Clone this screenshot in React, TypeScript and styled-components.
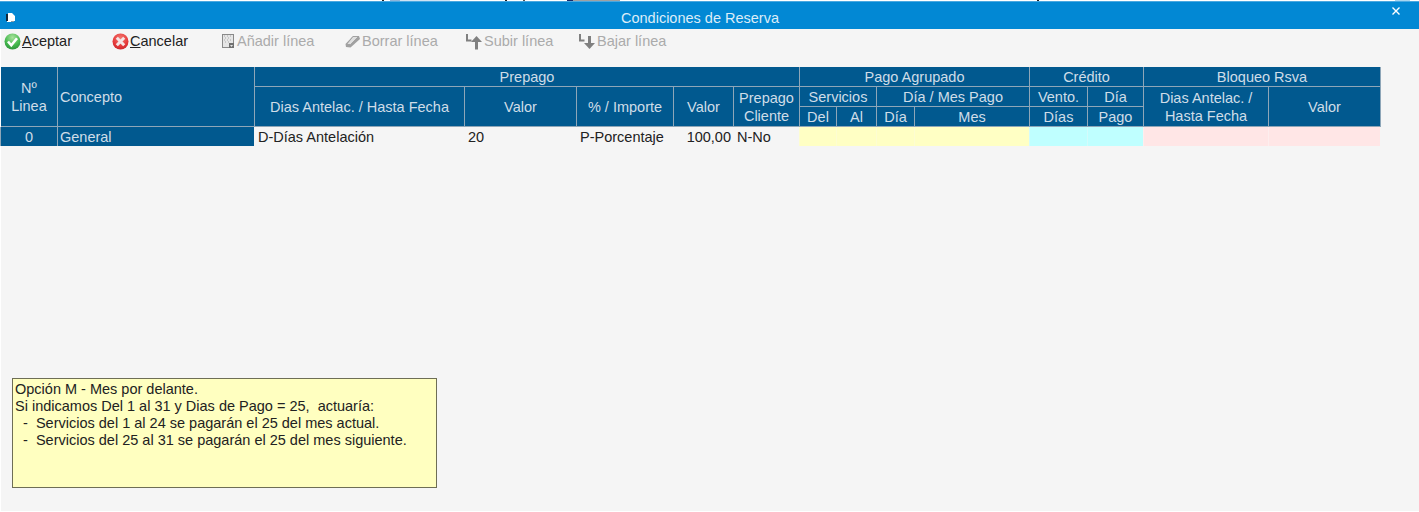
import React from 'react';
import styled, { createGlobalStyle } from 'styled-components';

const GlobalStyle = createGlobalStyle`
  html, body {
    margin: 0;
    padding: 0;
    background: #ffffff;
    overflow: hidden;
  }
  body {
    font-family: "Liberation Sans", Arial, sans-serif;
    font-size: 14.5px;
  }
`;

const Page = styled.div`
  width: 1419px;
  height: 511px;
  display: flex;
  flex-direction: column;
`;

// sliver of the window behind this dialog
const TopEdge = styled.div`
  height: 1px;
  flex: none;
  background: linear-gradient(
    to right,
    #ffffff 382px,
    #222222 382px 384px,
    #ffffff 384px 390px,
    #8fb4d8 390px 400px,
    #cfe2f2 400px 450px,
    #ffffff 450px 505px,
    #222222 505px 507px,
    #ffffff 507px 523px,
    #555555 523px 525px,
    #ffffff 525px 567px,
    #1a2a6a 567px 573px,
    #a0a0a0 573px 620px,
    #ffffff 620px 1037px,
    #222222 1037px 1039px,
    #ffffff 1039px 1395px,
    #a8d4ee 1395px 1410px,
    #ffffff 1410px
  );
`;

const TitleBar = styled.div`
  height: 28px;
  flex: none;
  box-sizing: border-box;
  display: flex;
  align-items: center;
  justify-content: space-between;
  padding: 0 19px 0 5px;
  border-top: 1px solid #4aa8e0;
  background: #0288d4;
  color: #dcedf8;
`;

const Title = styled.div`
  flex: 1;
  text-align: center;
  font-size: 14.5px;
  padding-top: 4px;
  margin-right: 8px;
`;

const WindowGlyph = styled.svg`
  width: 11px;
  height: 11px;
  margin-top: 3px;
`;

const CloseMark = styled.svg`
  width: 8px;
  height: 8px;
  margin-bottom: 9px;
`;

const Body = styled.div`
  flex: 1;
  display: flex;
  flex-direction: column;
  border-left: 1px solid #ffffff;
  background: #f5f5f5;
`;

const Toolbar = styled.div`
  height: 38px;
  flex: none;
  display: flex;
  align-items: flex-start;
  padding: 3px 0 0 3px;
  box-sizing: border-box;
`;

const ToolButton = styled.div<{ $width: number; $disabled?: boolean }>`
  width: ${(p) => p.$width}px;
  height: 18px;
  flex: none;
  display: flex;
  align-items: center;
  gap: 1px;
  font-size: 14.5px;
  color: ${(p) => (p.$disabled ? '#ababab' : '#222222')};

  u {
    text-decoration: underline;
  }
`;

const gridColumns = '56px 196px 209px 111px 96px 59px 65px 36px 39px 37px 114px 57px 55px 124px 111px';

const HeadGrid = styled.div`
  width: 1380px;
  display: grid;
  grid-template-columns: ${gridColumns};
  grid-template-rows: 19px 19px 19px;
  gap: 1px;
  padding-bottom: 1px;
  background: #8ea6b8;
`;

const HeadCell = styled.div<{ $col: string; $row: string; $left?: boolean }>`
  grid-column: ${(p) => p.$col};
  grid-row: ${(p) => p.$row};
  display: flex;
  align-items: center;
  justify-content: ${(p) => (p.$left ? 'flex-start' : 'center')};
  padding: 1px 0 0 ${(p) => (p.$left ? '2px' : '0')};
  box-sizing: border-box;
  text-align: center;
  line-height: 18px;
  background: #01598f;
  color: #cfdde8;
  font-size: 14.5px;
  white-space: pre-line;
`;

const DataGrid = styled.div`
  width: 1380px;
  display: grid;
  grid-template-columns: ${gridColumns};
  grid-template-rows: 19px;
  gap: 1px;
`;

const tones = {
  head: { fill: '#01598f', seam: '#8ea6b8' },
  plain: { fill: 'transparent', seam: 'transparent' },
  yellow: { fill: '#ffffc4', seam: '#fdfdd2' },
  cyan: { fill: '#bfffff', seam: '#d4fbfb' },
  pink: { fill: '#ffe6e6', seam: '#fdeeee' },
};

const DataCell = styled.div<{ $tone: keyof typeof tones; $center?: boolean; $right?: boolean }>`
  display: flex;
  align-items: center;
  justify-content: ${(p) => (p.$center ? 'center' : p.$right ? 'flex-end' : 'flex-start')};
  padding: ${(p) => (p.$right ? '0 2px 0 0' : p.$center ? '0' : '0 0 0 3px')};
  background: ${(p) => tones[p.$tone].fill};
  box-shadow: -1px 0 0 ${(p) => tones[p.$tone].seam};
  color: ${(p) => (p.$tone === 'head' ? '#cfdde8' : '#222222')};
  font-size: 14.5px;
  white-space: nowrap;
`;

const NameCell = styled(DataCell)`
  padding-left: 2px;
`;

const Note = styled.div`
  margin: 232px 0 0 11px;
  width: 425px;
  height: 110px;
  box-sizing: border-box;
  padding: 2px 2px;
  background: #ffffc0;
  border: 1px solid #6e6e55;
  color: #222222;
  font-size: 14.5px;
  line-height: 17px;
  white-space: pre;
`;

const OkIcon = () => (
  <svg width="17" height="17" viewBox="0 0 17 17">
    <defs>
      <radialGradient id="okFill" cx="0.5" cy="0.25" r="0.8">
        <stop offset="0" stopColor="#a8e29c" />
        <stop offset="0.6" stopColor="#45b84e" />
        <stop offset="1" stopColor="#2a9038" />
      </radialGradient>
    </defs>
    <circle cx="8.5" cy="8.5" r="8" fill="url(#okFill)" />
    <path d="M4 8.5 7.3 12.3 13 5.2" fill="none" stroke="#ffffff" strokeWidth="2.6" />
  </svg>
);

const CancelIcon = () => (
  <svg width="17" height="17" viewBox="0 0 17 17">
    <defs>
      <radialGradient id="cancelFill" cx="0.5" cy="0.3" r="0.8">
        <stop offset="0" stopColor="#f47a72" />
        <stop offset="0.6" stopColor="#e5393a" />
        <stop offset="1" stopColor="#c02028" />
      </radialGradient>
    </defs>
    <circle cx="8.5" cy="8.5" r="8" fill="url(#cancelFill)" />
    <path d="M4.8 4.8l7.4 7.4M12.2 4.8l-7.4 7.4" stroke="#f4e6e6" strokeWidth="3" />
  </svg>
);

const PageIcon = () => (
  <svg width="15" height="16" viewBox="0 0 15 16">
    <rect x="1.5" y="1.5" width="11" height="13" fill="#e6e6e6" stroke="#8a8a8a" />
    <path d="M3 3h1M6 3h1M9 3h1M4 5h1M7 5h1M3 7h1M6 7h1M9 7h1M4 9h1M7 9h1" stroke="#aaaaaa" />
    <rect x="8" y="10" width="5" height="5" fill="#707070" />
    <path d="M9 12l1.5 2 1.5-2" fill="#e6e6e6" />
  </svg>
);

const EraserIcon = () => (
  <svg width="16" height="14" viewBox="0 0 16 14">
    <path d="M8 2H14L15 5 5.5 13.5 1 13 0.5 10Z" fill="#a0a0a0" />
    <path d="M8 2.5H13.5L5.5 10.5H1.5Z" fill="#dedede" stroke="#9a9a9a" strokeWidth="0.8" />
  </svg>
);

const MoveIcon = ({ down }: { down?: boolean }) => (
  <svg width="17" height="17" viewBox="0 0 17 17">
    <path d="M1 1v6.5h4.5" fill="none" stroke="#808080" strokeWidth="2" />
    {down ? (
      <>
        <path d="M10.5 3v8" stroke="#808080" strokeWidth="3" />
        <path d="M5 10h11L10.5 16Z" fill="#808080" />
      </>
    ) : (
      <>
        <path d="M10.5 8v8.5" stroke="#808080" strokeWidth="3" />
        <path d="M5 9h11L10.5 3Z" fill="#808080" />
      </>
    )}
  </svg>
);

const App: React.FC = () => {
  return (
    <>
      <GlobalStyle />
      <Page>
        <TopEdge />
        <TitleBar>
          <WindowGlyph viewBox="0 0 11 11">
            <path d="M1 2h2V1h4l3 3v5H8v1H2V8H1Z" fill="#ffffff" />
            <path d="M1 2h2v7H1Z" fill="#10283c" />
            <path d="M6 9h3v1H6Z" fill="#8a9aa6" />
          </WindowGlyph>
          <Title>Condiciones de Reserva</Title>
          <CloseMark viewBox="0 0 8 8">
            <path d="M0.5 0.5 7.5 7.5M7.5 0.5 0.5 7.5" stroke="#ffffff" strokeWidth="1.4" />
          </CloseMark>
        </TitleBar>
        <Body>
          <Toolbar>
            <ToolButton $width={108}>
              <OkIcon />
              <span><u>A</u>ceptar</span>
            </ToolButton>
            <ToolButton $width={109}>
              <CancelIcon />
              <span><u>C</u>ancelar</span>
            </ToolButton>
            <ToolButton $width={124} $disabled>
              <PageIcon />
              <span>Añadir línea</span>
            </ToolButton>
            <ToolButton $width={121} $disabled>
              <EraserIcon />
              <span>Borrar línea</span>
            </ToolButton>
            <ToolButton $width={113} $disabled>
              <MoveIcon />
              <span>Subir línea</span>
            </ToolButton>
            <ToolButton $width={110} $disabled>
              <MoveIcon down />
              <span>Bajar línea</span>
            </ToolButton>
          </Toolbar>
          <HeadGrid>
            <HeadCell $col="1" $row="1 / 4">{'Nº\nLinea'}</HeadCell>
            <HeadCell $col="2" $row="1 / 4" $left>Concepto</HeadCell>
            <HeadCell $col="3 / 8" $row="1">Prepago</HeadCell>
            <HeadCell $col="3" $row="2 / 4">Dias Antelac. / Hasta Fecha</HeadCell>
            <HeadCell $col="4" $row="2 / 4">Valor</HeadCell>
            <HeadCell $col="5" $row="2 / 4">% / Importe</HeadCell>
            <HeadCell $col="6" $row="2 / 4">Valor</HeadCell>
            <HeadCell $col="7" $row="2 / 4">{'Prepago\nCliente'}</HeadCell>
            <HeadCell $col="8 / 12" $row="1">Pago Agrupado</HeadCell>
            <HeadCell $col="8 / 10" $row="2">Servicios</HeadCell>
            <HeadCell $col="10 / 12" $row="2">Día / Mes Pago</HeadCell>
            <HeadCell $col="8" $row="3">Del</HeadCell>
            <HeadCell $col="9" $row="3">Al</HeadCell>
            <HeadCell $col="10" $row="3">Día</HeadCell>
            <HeadCell $col="11" $row="3">Mes</HeadCell>
            <HeadCell $col="12 / 14" $row="1">Crédito</HeadCell>
            <HeadCell $col="12" $row="2">Vento.</HeadCell>
            <HeadCell $col="13" $row="2">Día</HeadCell>
            <HeadCell $col="12" $row="3">Días</HeadCell>
            <HeadCell $col="13" $row="3">Pago</HeadCell>
            <HeadCell $col="14 / 16" $row="1">Bloqueo Rsva</HeadCell>
            <HeadCell $col="14" $row="2 / 4">{'Dias Antelac. /\nHasta Fecha'}</HeadCell>
            <HeadCell $col="15" $row="2 / 4">Valor</HeadCell>
          </HeadGrid>
          <DataGrid>
            <DataCell $tone="head" $center>0</DataCell>
            <NameCell $tone="head">General</NameCell>
            <DataCell $tone="plain">D-Días Antelación</DataCell>
            <DataCell $tone="plain">20</DataCell>
            <DataCell $tone="plain">P-Porcentaje</DataCell>
            <DataCell $tone="plain" $right>100,00</DataCell>
            <DataCell $tone="plain">N-No</DataCell>
            <DataCell $tone="yellow" />
            <DataCell $tone="yellow" />
            <DataCell $tone="yellow" />
            <DataCell $tone="yellow" />
            <DataCell $tone="cyan" />
            <DataCell $tone="cyan" />
            <DataCell $tone="pink" />
            <DataCell $tone="pink" />
          </DataGrid>
          <Note>
            {'Opción M - Mes por delante.\nSi indicamos Del 1 al 31 y Dias de Pago = 25,  actuaría:\n  -  Servicios del 1 al 24 se pagarán el 25 del mes actual.\n  -  Servicios del 25 al 31 se pagarán el 25 del mes siguiente.'}
          </Note>
        </Body>
      </Page>
    </>
  );
};

export default App;
